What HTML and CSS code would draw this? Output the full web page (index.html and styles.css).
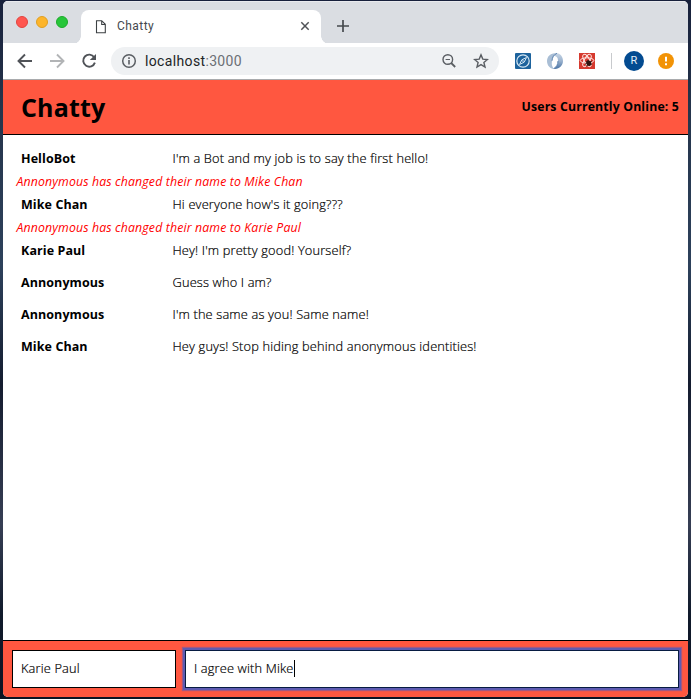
FILE: index.html
```html
<!DOCTYPE html>
<html lang="en">
<head>
<meta charset="utf-8">
<title>Chatty</title>
<link rel="stylesheet" href="styles.css">
</head>
<body>
<div class="window">
  <div class="tabstrip">
    <div class="lights"><span class="light red"></span><span class="light yellow"></span><span class="light green"></span></div>
    <div class="tab">
      <svg class="page-icon" width="12" height="16" viewBox="0 0 12 16"><path d="M1.5 1.7h5.2l3.6 3.6v8.5H1.5z M6.7 1.7v3.8h3.6" fill="none" stroke="#3c4043" stroke-width="1.1"/></svg>
      <span class="tab-title">Chatty</span>
      <svg class="close" width="10" height="10" viewBox="0 0 10 10"><path d="M1.3 1.3l7.4 7.4M8.7 1.3L1.3 8.7" stroke="#505357" stroke-width="1.5"/></svg>
    </div>
    <svg class="plus" width="12" height="12" viewBox="0 0 12 12"><path d="M6 0v12M0 6h12" stroke="#45494d" stroke-width="1.7"/></svg>
  </div>
  <div class="toolbar">
    <svg class="nav" width="16" height="16" viewBox="0 0 16 16"><path d="M15 8H2M8 1.5L1.5 8 8 14.5" fill="none" stroke="#505358" stroke-width="1.9"/></svg>
    <svg class="nav" width="16" height="16" viewBox="0 0 16 16"><path d="M1 8h13M8 1.5L14.5 8 8 14.5" fill="none" stroke="#b2b4b6" stroke-width="1.9"/></svg>
    <svg class="nav" width="16" height="16" viewBox="0 0 16 16"><path d="M13.2 4.3A6 6 0 1 0 13.9 9.6" fill="none" stroke="#505358" stroke-width="1.9"/><path d="M15 .9v6.2H8.8z" fill="#505358"/></svg>
    <div class="address">
      <svg width="16" height="16" viewBox="0 0 16 16"><circle cx="8" cy="8" r="6.3" fill="none" stroke="#5a5e63" stroke-width="1.5"/><path d="M8 7.1v4.4M8 4.3v1.6" stroke="#5a5e63" stroke-width="1.6"/></svg>
      <span class="url">localhost<span>:3000</span></span>
      <svg class="magnifier" width="16" height="16" viewBox="0 0 16 16"><circle cx="6.8" cy="6.5" r="4.8" fill="none" stroke="#5a5e63" stroke-width="1.4"/><path d="M10.2 10l4 4" stroke="#5a5e63" stroke-width="1.8"/><path d="M4.6 6.5H9" stroke="#5a5e63" stroke-width="1.2"/></svg>
      <svg width="16" height="16" viewBox="0 0 16 16"><path d="M8 1.9l1.8 4.2 4.6.4-3.5 3 1.1 4.5L8 11.6 4 14l1.1-4.5-3.5-3 4.6-.4z" fill="none" stroke="#5a5e63" stroke-width="1.4"/></svg>
    </div>
    <svg class="ext" width="16" height="16" viewBox="0 0 16 16"><rect width="16" height="16" rx="1" fill="#1d639d"/><circle cx="8" cy="8" r="6.2" fill="none" stroke="#d7e9f5" stroke-width="1.2"/><path d="M11.5 4.5L9.2 9.2 4.5 11.5 6.8 6.8z" fill="none" stroke="#d7e9f5"/><circle cx="8" cy="8" r=".8" fill="#d7e9f5"/></svg>
    <svg class="ext" width="16" height="16" viewBox="0 0 16 16"><defs><linearGradient id="right" x1="0" y1="0" x2="0" y2="1"><stop offset="0" stop-color="#c8d6e5"/><stop offset=".5" stop-color="#9bb3cf"/><stop offset="1" stop-color="#4872a3"/></linearGradient></defs><path d="M10 .3C3.500-.8 0 3.500 0 8s3 7.500 7 8C4.500 13 4.600 10.500 5 7.800 5.500 4.500 7.500 2.500 10 .3z" fill="#a9bed5"/><path d="M9 .1c4.500.3 7 3.900 7 7.900 0 4.600-4 8.600-9.500 7.800C9.500 14 11 11.500 11 8S10 3.500 7.500 3z" fill="url(#right)"/><path d="M10 .3C6.500 2 5.300 4 5 7.800M6.500 15.800C9.500 14 11 11.500 11 8" fill="none" stroke="#6086b2"/></svg>
    <svg class="ext" width="16" height="16" viewBox="0 0 16 16"><rect width="16" height="16" fill="#d63a2f"/><g fill="none" stroke="#ffe8e4"><ellipse cx="8" cy="7.500" rx="6.800" ry="2.700"/><ellipse cx="8" cy="7.500" rx="6.800" ry="2.700" transform="rotate(60 8 7.500)"/><ellipse cx="8" cy="7.500" rx="6.800" ry="2.700" transform="rotate(120 8 7.500)"/></g><path d="M7 8.500l2-1.500 3 1.500.5 3-2 1.500-2.500-1z" fill="#301613"/><path d="M6 11l7-3M7 13l6-2" stroke="#301613" stroke-width=".8"/></svg>
    <span class="divider"></span>
    <span class="avatar">R</span>
    <svg class="warn" width="16" height="16" viewBox="0 0 16 16"><circle cx="8" cy="8" r="8" fill="#f29306"/><path d="M8 3.800v4.800M8 10.200v2" stroke="#fff" stroke-width="2"/></svg>
  </div>
  <header class="header">
    <h1>Chatty</h1>
    <span class="online">Users Currently Online: 5</span>
  </header>
  <main class="messages">
    <div class="message"><b>HelloBot</b><span>I'm a Bot and my job is to say the first hello!</span></div>
    <div class="notice">Annonymous has changed their name to Mike Chan</div>
    <div class="message"><b>Mike Chan</b><span>Hi everyone how's it going???</span></div>
    <div class="notice">Annonymous has changed their name to Karie Paul</div>
    <div class="message"><b>Karie Paul</b><span>Hey! I'm pretty good! Yourself?</span></div>
    <div class="message"><b>Annonymous</b><span>Guess who I am?</span></div>
    <div class="message"><b>Annonymous</b><span>I'm the same as you! Same name!</span></div>
    <div class="message"><b>Mike Chan</b><span>Hey guys! Stop hiding behind anonymous identities!</span></div>
  </main>
  <footer class="chatbar">
    <div class="field name">Karie Paul</div>
    <div class="field text">I agree with Mike<i class="caret"></i></div>
  </footer>
</div>
</body>
</html>
```

FILE: styles.css
```css
* { box-sizing: border-box; }
body {
  margin: 0;
  height: 699px;
  padding: 1px 3px 2px;
  overflow: hidden;
  background: linear-gradient(#17203b 0%, #25344b 15%, #2d415b 38%, #141c2f 55%, #363e54 75%, #101a2b 88%, #0d1323 100%);
  font-family: "Open Sans", sans-serif;
}
.window {
  display: flex;
  flex-direction: column;
  height: 696px;
  border-radius: 5px;
  overflow: hidden;
  background: #fff;
}
.tabstrip {
  display: flex;
  flex: none;
  height: 42px;
  padding: 8px 0 0 13px;
  border-top: 1px solid #e9eaee;
  background: #dadde2;
}
.lights { display: flex; gap: 8px; width: 65px; padding-top: 6px; }
.light { width: 12px; height: 12px; border-radius: 50%; border: 1px solid; }
.red { background: #ff5650; border-color: #e2443f; }
.yellow { background: #fdb52b; border-color: #e09f22; }
.green { background: #27c63a; border-color: #1dab2b; }
.tab {
  position: relative;
  display: flex;
  align-items: center;
  width: 240px;
  height: 34px;
  padding: 0 11px 0 14px;
  border-radius: 8px 8px 0 0;
  background: #fff;
}
.tab::before, .tab::after {
  content: "";
  position: absolute;
  bottom: 0;
  width: 8px;
  height: 8px;
}
.tab::before { left: -8px; background: radial-gradient(circle at 0 0, transparent 7.500px, #fff 8px); }
.tab::after { right: -8px; background: radial-gradient(circle at 100% 0, transparent 7.500px, #fff 8px); }
.tab-title { flex: 1; margin: -2px 0 0 10px; font: 12px Roboto, sans-serif; letter-spacing: .45px; color: #45494d; }
.plus { margin: 10px 0 0 16px; }
.close { margin-top: -2px; }
.toolbar {
  display: flex;
  flex: none;
  align-items: center;
  height: 37px;
  padding: 0 14px;
  border-bottom: 1px solid #a9abad;
}
.nav { margin-right: 16px; }
.address {
  display: flex;
  align-items: center;
  width: 388px;
  height: 28px;
  margin-left: -2px;
  padding: 0 10px;
  border-radius: 14px;
  background: #eff1f3;
}
.url { flex: 1; margin-left: 8px; font: 14px Roboto, sans-serif; letter-spacing: .35px; color: #222427; }
.url span { color: #6b6f75; }
.magnifier { margin-right: 16px; }
.ext { margin-left: 16px; }
.divider { width: 1px; height: 16px; margin: 0 12px 0 16px; background: #c8cacd; }
.avatar {
  width: 20px;
  height: 20px;
  border-radius: 50%;
  background: #034b91;
  color: #e6eff8;
  font: 11px/20px Roboto, sans-serif;
  text-align: center;
}
.warn { margin-left: 14px; }
.header {
  display: flex;
  flex: none;
  align-items: center;
  justify-content: space-between;
  height: 55px;
  padding: 0 9px 0 18px;
  border-bottom: 1px solid #000;
  background: #ff5740;
}
.header h1 { margin: 0; font-size: 25px; line-height: 36px; letter-spacing: .15px; }
.online { margin-top: -2px; font-size: 12.300px; font-weight: 700; letter-spacing: .15px; }
.messages { flex: 1; padding: 7px 13px; font-size: 12.800px; color: #000; }
.message { display: flex; height: 32px; padding-left: 5px; line-height: 32px; letter-spacing: .16px; }
.message b { width: 151.500px; font-size: 12.500px; letter-spacing: .08px; }
.message span { font-weight: 300; -webkit-text-stroke: .2px #000; }
.notice { height: 14px; line-height: 16px; padding-left: .5px; font-size: 12.300px; font-style: italic; color: #f00; letter-spacing: .14px; }
.message b { line-height: 33px; }
.chatbar {
  display: flex;
  flex: none;
  gap: 9px;
  height: 57px;
  padding: 9px;
  border-top: 1px solid #000;
  background: #ff5740;
}
.field {
  display: flex;
  align-items: center;
  height: 38px;
  padding: 0 0 2px 8px;
  border: 1px solid #000;
  background: #fff;
  font-size: 12.800px;
  font-weight: 300;
  letter-spacing: .16px;
  -webkit-text-stroke: .2px #000;
}
.name { width: 164px; }
.text { flex: 1; border-color: #071c42; box-shadow: 0 0 0 2px #5e5bb1, 0 0 1px 3px #a35981; }
.caret { width: 1px; height: 17px; background: #000; }
```
